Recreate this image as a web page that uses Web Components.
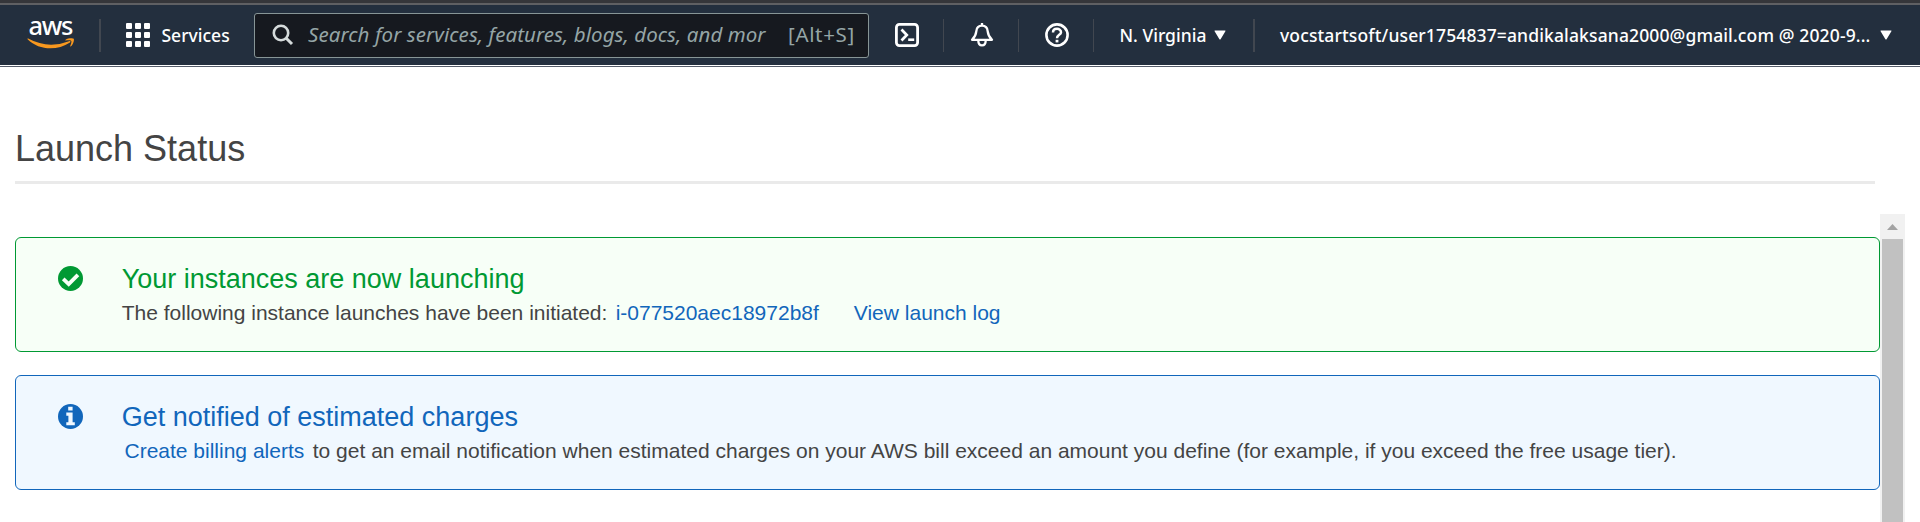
<!DOCTYPE html>
<html lang="en">
<head>
<meta charset="utf-8">
<title>Launch Status</title>
<style>
html,body{margin:0;height:100%;overflow:hidden;background:#fff}
body{font-family:"Liberation Sans",Arial,sans-serif;color:#444}
</style>
</head>
<body>
<launch-page></launch-page>
<script>
function define(name, html) {
  const t = document.createElement('template');
  t.innerHTML = html;
  customElements.define(name, class extends HTMLElement {
    constructor() {
      super();
      this.attachShadow({ mode: 'open' }).append(t.content.cloneNode(true));
    }
  });
}

define('aws-logo', `
<style>
:host{display:flex;flex-direction:column;width:48px;height:32px;color:#fff}
span{font:500 25.5px/19px "Noto Sans",sans-serif;letter-spacing:-1.3px;height:19px;margin-top:-3.5px;padding-left:1.5px;white-space:nowrap}
svg{display:block;width:48px;height:12px;margin-top:3.5px}
</style>
<span>aws</span>
<svg viewBox="0 0 48 12"><path fill="#f7981f" d="M.6 1.2Q0 .3 1.200.6Q21 11.400 42 3.200C43.300 2.700 44.100 3.600 43 4.400C30 13 12 12.500.6 1.200Z"/><path fill="#f7981f" d="M38.600 1.700C41 0 46 0 46.800.9C47.400 2.100 46 6.600 43.900 8.300C43.400 8.700 43 8.400 43.200 7.900C44 6 44.800 3.700 44.300 3C43.700 2.300 41 2.200 39 2.400C38.300 2.500 38.200 2 38.600 1.700Z"/></svg>`);

define('services-button', `
<style>
:host{display:flex;align-items:center;gap:11.500px;color:#fff}
.grid{display:grid;grid-template-columns:repeat(3,6px);grid-auto-rows:6px;gap:3px}
i{background:#fff;border-radius:1px}
span{font:500 17.5px/24px "Noto Sans",sans-serif;margin-top:-1px}
</style>
<div class="grid"><i></i><i></i><i></i><i></i><i></i><i></i><i></i><i></i><i></i></div>
<span><slot></slot></span>`);

define('search-box', `
<style>
:host{display:flex;align-items:center;box-sizing:border-box;width:615px;height:45px;border:1px solid #879596;border-radius:3px;background:#16191f;color:#95a5a6;padding:0 12px 0 17px;font:20.5px/30px "Noto Sans",sans-serif;white-space:nowrap}
svg{width:22px;height:22px;flex:none}
.q{font-style:italic;width:459px;margin-left:14px;overflow:hidden;letter-spacing:.07px;margin-top:-2px}
.k{margin-left:21px;letter-spacing:.65px;margin-top:-2px}
</style>
<svg viewBox="0 0 22 22" fill="none" stroke="#d5dbdb"><circle cx="9" cy="9" r="7.200" stroke-width="2.600"/><path d="M14 14l6 6" stroke-width="3"/></svg>
<span class="q"><slot></slot></span><span class="k"><slot name="shortcut"></slot></span>`);

define('nav-icon', `
<style>
:host{display:block;width:24px;height:24px;color:#fff}
::slotted(svg){display:block;width:24px;height:24px}
</style><slot></slot>`);

define('nav-divider', `<style>:host{display:block;width:1px;height:33px;background:#414750}:host([wide]){width:2px}</style>`);

define('nav-menu', `
<style>
:host{display:flex;align-items:center;color:#fff;font:500 17.5px/24px "Noto Sans",sans-serif;white-space:nowrap}
span{margin-top:-1px}
svg{width:12px;height:10px;margin-left:auto}
</style>
<span><slot></slot></span>
<svg viewBox="0 0 12 10"><path d="M1 .5h10q.9 0 .4.8L6.600 9.200q-.6.8-1.200 0L.6 1.300Q.1.500 1 .5z" fill="#fff"/></svg>`);

define('top-bar', `
<style>
:host{display:block}
.edge{height:3px;background:#35363a;border-bottom:2px solid #5f6063}
nav{display:flex;align-items:center;height:60px;padding-left:27px;background:#232f3e}
.line{height:1px;margin-top:1px;background:#545b69}
.region{width:106.500px;margin-left:25.500px}
.user{width:612px;margin-left:25px}
.acct{letter-spacing:.13px}
</style>
<div class="edge"></div>
<nav>
<aws-logo></aws-logo>
<nav-divider wide style="margin-left:24px"></nav-divider>
<services-button style="margin-left:25px;width:128px">Services</services-button>
<search-box>Search for services, features, blogs, docs, and mor<span slot="shortcut">[Alt+S]</span></search-box>
<nav-icon style="margin-left:26px"><svg viewBox="0 0 24 24" fill="none" stroke="currentColor"><rect x="1.400" y="1.400" width="21.200" height="21.200" rx="3" stroke-width="2.800"/><path d="M6.500 6.500l5.300 5.500-5.300 5.500" stroke-width="2.700"/><path d="M13.200 16.700h6" stroke-width="2.600"/></svg></nav-icon>
<nav-divider style="margin-left:24px"></nav-divider>
<nav-icon style="margin-left:26px"><svg viewBox="0 0 24 24" fill="none" stroke="currentColor" stroke-width="2.300" stroke-linejoin="round"><path d="M12 0v3M2 16.800C5.500 13.500 6 11.500 6.300 8.300C6.600 4.600 8.500 2.700 12 2.700s5.400 1.900 5.700 5.600c.3 3.200.8 5.200 4.300 8.500z"/><path d="M8.300 17.500c0 6.600 7.400 6.600 7.400 0"/></svg></nav-icon>
<nav-divider style="margin-left:24px"></nav-divider>
<nav-icon style="margin-left:26px"><svg viewBox="0 0 24 24" fill="none" stroke="currentColor" stroke-width="2.600"><circle cx="12" cy="12" r="10.600"/><path d="M8 9.500C8 4.600 16 4.700 16 9.200C16 12 12 11.700 12 15.300" stroke-width="2.500"/><path d="M12 16.800v2.600" stroke-width="2.800"/></svg></nav-icon>
<nav-divider style="margin-left:24px"></nav-divider>
<nav-menu class="region">N. Virginia</nav-menu>
<nav-divider wide style="margin-left:27px"></nav-divider>
<nav-menu class="user"><span class="acct">vocstartsoft/user1754837=andikalaksana2000@gmail.com @ 2020-9...</span></nav-menu>
</nav>
<div class="line"></div>`);

define('page-title', `
<style>
:host{display:block;box-sizing:border-box;margin:61px 45px 0 15px;height:56px;border-bottom:3px solid #eaeaea}
h1{margin:0;font-weight:400;font-size:36px;line-height:42px;color:#444}
</style><h1><slot></slot></h1>`);

define('alert-box', `
<style>
:host{display:flex;box-sizing:border-box;height:115px;border:1px solid var(--c);border-radius:6px;background:var(--bg);padding:26px 0 0 42px;white-space:nowrap}
.icon{width:25px;height:25px;margin-top:2px;flex:none}
::slotted(svg){display:block;width:25px;height:25px}
.text{margin-left:38.700px}
h2{margin:0;font-weight:400;font-size:27px;line-height:30px;color:var(--c)}
p{margin:4px 0 0;font-size:21px;line-height:30px;color:#444;display:flex}
</style>
<div class="icon"><slot name="icon"></slot></div>
<div class="text"><h2><slot name="title"></slot></h2><p><slot></slot></p></div>`);

define('text-link', `<style>:host{display:block}a{color:#1166bb;text-decoration:none;cursor:pointer}</style><a><slot></slot></a>`);

define('scroll-rail', `
<style>
:host{display:flex;flex-direction:column;width:25px;background:#f1f1f1}
.btn{height:25px;display:flex;align-items:center;justify-content:center}
.thumb{flex:1;margin:0 2px;background:#c1c1c1}
svg{width:11px;height:6px;margin-top:1px}
</style>
<div class="btn"><svg viewBox="0 0 11 6"><path d="M0 6L5.500 0L11 6z" fill="#a3a3a3"/></svg></div><div class="thumb"></div>`);

define('launch-page', `
<style>
:host{display:flex;flex-direction:column;height:522px}
.body{display:flex;flex:1;margin:30px 15px 0 15px;min-height:0}
.list{flex:1;display:flex;flex-direction:column;gap:23px;padding-top:23px}
.ok{--c:#009933;--bg:#f7fff7}
.info{--c:#1166bb;--bg:#f0f8ff}
</style>
<top-bar></top-bar>
<page-title>Launch Status</page-title>
<div class="body">
<div class="list">
<alert-box class="ok">
<svg slot="icon" viewBox="0 0 25 25"><circle cx="12.500" cy="12.500" r="12.500" fill="#093"/><path d="M5.200 12.900l5.500 5.200 9.200-9.300" fill="none" stroke="#f7fff7" stroke-width="3.800"/></svg>
<span slot="title">Your instances are now launching</span>
<span>The following instance launches have been initiated:</span><text-link style="margin-left:8.300px">i-077520aec18972b8f</text-link><text-link style="margin-left:35px">View launch log</text-link>
</alert-box>
<alert-box class="info">
<svg slot="icon" viewBox="0 0 25 25"><circle cx="12.500" cy="12.500" r="12.500" fill="#16b"/><path d="M10.200 2.800h4.400v3.700h-4.400zM8.300 8.600h6.300v9.600h2.200v3H8.300v-3h2.100v-6.500H8.300z" fill="#f0f8ff"/></svg>
<span slot="title">Get notified of estimated charges</span>
<text-link style="margin-left:2.800px">Create billing alerts</text-link><span style="margin-left:8.500px">to get an email notification when estimated charges on your AWS bill exceed an amount you define (for example, if you exceed the free usage tier).</span>
</alert-box>
</div>
<scroll-rail></scroll-rail>
</div>`);
</script>
</body>
</html>
